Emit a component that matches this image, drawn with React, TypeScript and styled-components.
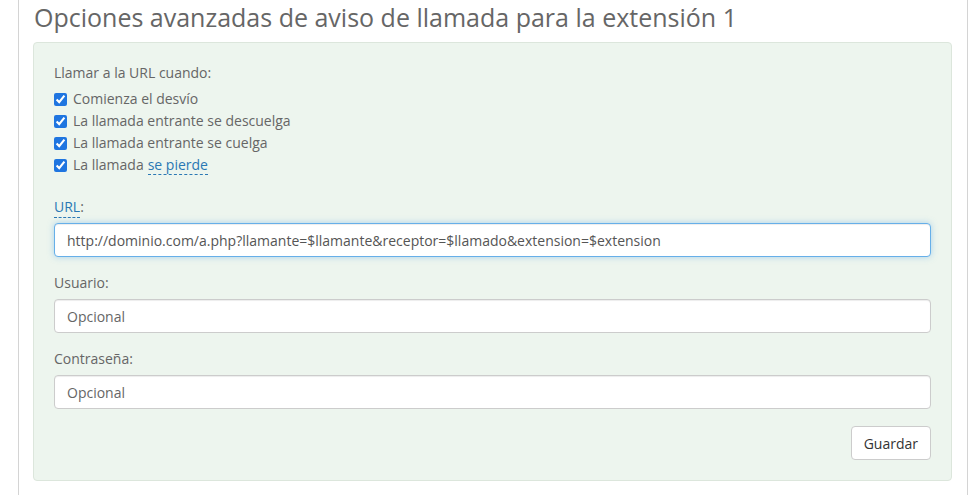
import React from "react";
import styled, { createGlobalStyle } from "styled-components";

const Global = createGlobalStyle`
  html, body { margin: 0; padding: 0; background: #fff; }
  body { font-family: "Open Sans", "Liberation Sans", sans-serif; font-size: 14px; color: #666; }
  * { box-sizing: border-box; }
`;

const Page = styled.div`
  margin-left: 18px;
  width: 950px;
  min-height: 495px;
  border-left: 1px solid #d4d4d4;
  border-right: 1px solid #d4d4d4;
  padding: 4px 15px 0 14px;
`;

const Title = styled.h2`
  margin: 0 0 12px 1px;
  font-size: 25px;
  font-weight: 400;
  line-height: 26px;
  color: #666;
`;

const Panel = styled.div`
  background: #edf5ee;
  border: 1px solid #dce6dc;
  border-radius: 4px;
  padding: 19px 20px 20px 20px;
  display: flex;
  flex-direction: column;
`;

const Intro = styled.div`
  line-height: 22px;
  margin-bottom: 4px;
`;

const CheckList = styled.div`
  display: flex;
  flex-direction: column;
  margin-bottom: 20px;
`;

const CheckRow = styled.label`
  display: flex;
  align-items: center;
  line-height: 22px;
  height: 22px;
`;

const Check = styled.input`
  width: 13px;
  height: 13px;
  margin: 0 6px 0 0;
  accent-color: #1f75e0;
`;

const Hint = styled.span`
  color: #2a78b4;
  border-bottom: 1px dashed #2a78b4;
  line-height: 18px;
  margin-left: 4px;
`;

const Group = styled.div`
  display: flex;
  flex-direction: column;
  margin-bottom: 15px;
`;

const Label = styled.label`
  line-height: 22px;
  margin-bottom: 5px;
  display: flex;
`;

const LinkLabel = styled.span`
  color: #2a78b4;
  border-bottom: 1px dashed #2a78b4;
  line-height: 18px;
  margin-top: 2px;
`;

const Field = styled.input<{ $focus?: boolean }>`
  height: 34px;
  width: 100%;
  padding: 6px 12px;
  font-family: "Open Sans", "Liberation Sans", sans-serif;
  font-size: 14px;
  color: #555;
  background: #fff;
  border: 1px solid ${(p) => (p.$focus ? "#66afe9" : "#ccc")};
  border-radius: 4px;
  box-shadow: ${(p) =>
    p.$focus
      ? "inset 0 1px 1px rgba(0,0,0,.075), 0 0 6px rgba(102,175,233,.5)"
      : "inset 0 1px 1px rgba(0,0,0,.075)"};
  outline: none;
  &::placeholder { color: #666; opacity: 1; }
`;

const Actions = styled.div`
  display: flex;
  justify-content: flex-end;
  margin-top: 2px;
`;

const Button = styled.button`
  height: 34px;
  padding: 6px 12px;
  font-family: "Open Sans", "Liberation Sans", sans-serif;
  font-size: 14px;
  color: #333;
  background: #fff;
  border: 1px solid #ccc;
  border-radius: 4px;
`;

const options = [
  "Comienza el desvío",
  "La llamada entrante se descuelga",
  "La llamada entrante se cuelga",
];

export default function App() {
  return (
    <>
      <Global />
      <Page>
        <Title>Opciones avanzadas de aviso de llamada para la extensión 1</Title>
        <Panel>
          <Intro>Llamar a la URL cuando:</Intro>
          <CheckList>
            {options.map((o) => (
              <CheckRow key={o}>
                <Check type="checkbox" defaultChecked />
                {o}
              </CheckRow>
            ))}
            <CheckRow>
              <Check type="checkbox" defaultChecked />
              La llamada<Hint>se pierde</Hint>
            </CheckRow>
          </CheckList>
          <Group>
            <Label>
              <LinkLabel>URL</LinkLabel>:
            </Label>
            <Field
              $focus
              defaultValue="http://dominio.com/a.php?llamante=$llamante&receptor=$llamado&extension=$extension"
            />
          </Group>
          <Group>
            <Label>Usuario:</Label>
            <Field placeholder="Opcional" />
          </Group>
          <Group>
            <Label>Contraseña:</Label>
            <Field placeholder="Opcional" />
          </Group>
          <Actions>
            <Button>Guardar</Button>
          </Actions>
        </Panel>
      </Page>
    </>
  );
}
